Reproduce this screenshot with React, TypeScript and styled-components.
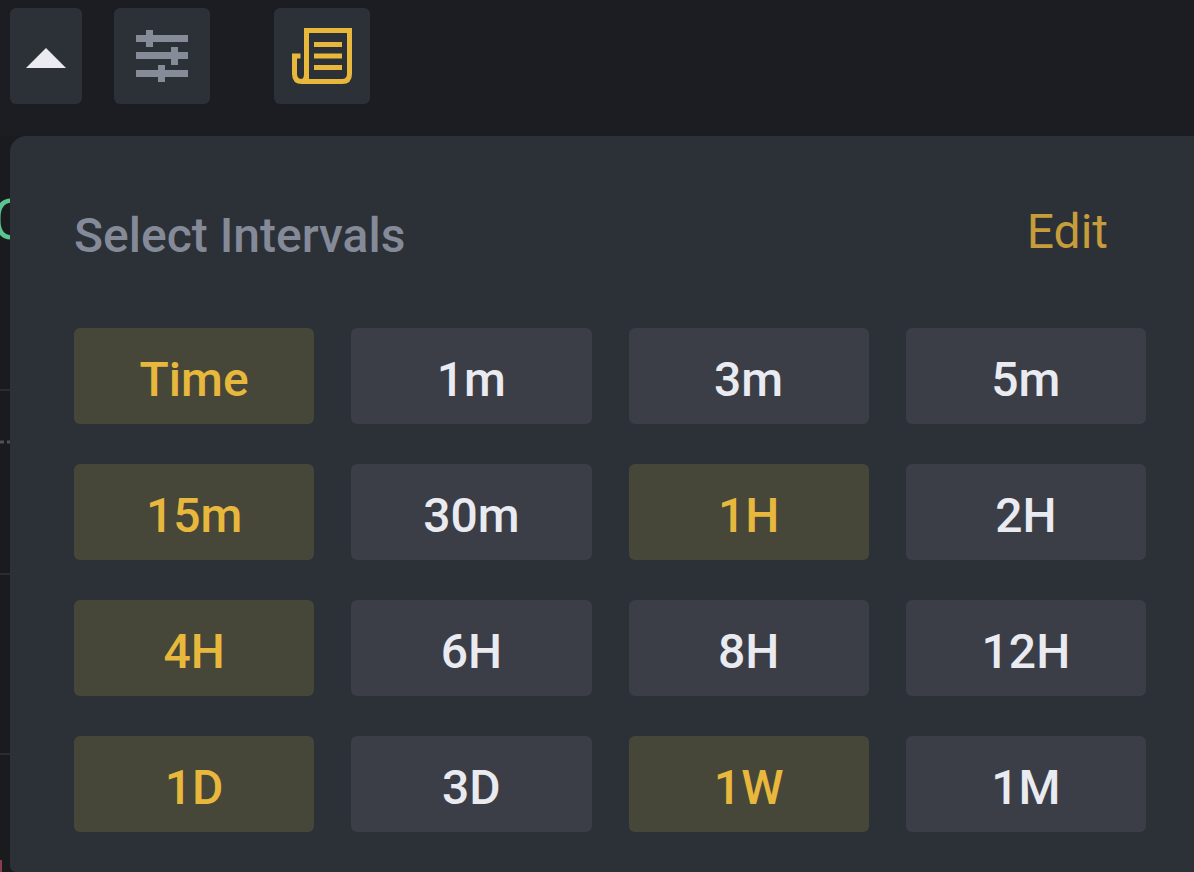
import React, { useState } from "react";
import styled, { createGlobalStyle } from "styled-components";

const GlobalStyle = createGlobalStyle`
  *, *::before, *::after { box-sizing: border-box; }
  body {
    margin: 0;
    background: #1c1d22;
    font-family: Roboto, "Liberation Sans", sans-serif;
  }
  button { font: inherit; border: 0; padding: 0; cursor: pointer; }
`;

const Page = styled.div`
  display: flex;
  flex-direction: column;
  min-height: 100vh;
`;

const Toolbar = styled.header`
  display: flex;
  gap: 32px;
  padding: 8px 10px 32px;
`;

const ToolButton = styled.button<{ $narrow?: boolean; $apart?: boolean }>`
  display: flex;
  align-items: center;
  justify-content: center;
  width: ${(p) => (p.$narrow ? 72 : 96)}px;
  height: 96px;
  margin-left: ${(p) => (p.$apart ? 32 : 0)}px;
  border-radius: 6px;
  background: #2c3037;
`;

const Workspace = styled.main`
  position: relative;
  flex: 1;
  padding-left: 10px;
`;

const ChartLayer = styled.div`
  position: absolute;
  inset: 0;
  overflow: hidden;
  background: #1a1b1f;
`;

const ChartLines = styled.svg`
  position: absolute;
  inset: 0;
`;

const ChartValue = styled.span`
  position: absolute;
  top: 48px;
  left: -8px;
  font-size: 56px;
  line-height: 72px;
  color: #5cc491;
`;

const Panel = styled.section`
  position: relative;
  padding: 64px 48px 40px 64px;
  border-radius: 16px 0 0 6px;
  background: #2c3037;
`;

const PanelHeader = styled.div`
  display: flex;
  justify-content: space-between;
  padding-right: 38px;
  margin-bottom: 56px;
`;

const Title = styled.h2`
  margin: 0;
  font-size: 48px;
  line-height: 72px;
  font-weight: 500;
  color: #848a98;
`;

const EditButton = styled.button`
  background: none;
  font-size: 48px;
  line-height: 64px;
  height: 64px;
  color: #c69d3a;
`;

const IntervalGrid = styled.div`
  display: grid;
  grid-template-columns: repeat(4, 1fr);
  gap: 40px 37px;
`;

const IntervalButton = styled.button<{ $active: boolean }>`
  height: 96px;
  padding-top: 8px;
  border-radius: 6px;
  font-size: 48px;
  line-height: 64px;
  font-weight: 500;
  background: ${(p) => (p.$active ? "#474739" : "#3b3e47")};
  color: ${(p) => (p.$active ? "#e8b83d" : "#e9ebf0")};
`;

const intervals = [
  "Time", "1m", "3m", "5m",
  "15m", "30m", "1H", "2H",
  "4H", "6H", "8H", "12H",
  "1D", "3D", "1W", "1M",
];

export default function App() {
  const [selected, setSelected] = useState(["Time", "15m", "1H", "4H", "1D", "1W"]);

  const toggle = (name: string) =>
    setSelected((all) => (all.includes(name) ? all.filter((n) => n !== name) : [...all, name]));

  return (
    <>
      <GlobalStyle />
      <Page>
        <Toolbar>
          <ToolButton $narrow aria-label="Close intervals">
            <svg width="40" height="24" viewBox="0 0 40 24">
              <path d="M20 4 40 24H0Z" fill="#e9ebf0" />
            </svg>
          </ToolButton>
          <ToolButton aria-label="Indicators">
            <svg width="52" height="52" viewBox="0 0 52 52" fill="#868b98">
              <path d="M0 5h10V0h7v5h35v7H17v5h-7v-5H0zM0 22h35v-5h7v5h10v7H42v6h-7v-6H0zM0 40h22v-5h7v5h23v7H29v5h-7v-5H0z" />
            </svg>
          </ToolButton>
          <ToolButton $apart aria-label="News">
            <svg width="60" height="56" viewBox="0 0 60 56" fill="none" stroke="#e8b83d" strokeWidth="5">
              <path d="M14.500 53.500V2.500H57.500V46Q57.500 53.500 50 53.500H10Q2.500 53.500 2.500 46V28H8.500M14.500 46Q14.500 53.500 9 53.500" />
              <path d="M22 16.500H50M22 28H50M22 39.500H50" />
            </svg>
          </ToolButton>
        </Toolbar>
        <Workspace>
          <ChartLayer aria-hidden="true">
            <ChartLines width="100%" height="736">
              <path d="M0 254H1194M0 438H1194M0 618H1194" stroke="#2a2c32" strokeWidth="2" />
              <path d="M0 306H1194" stroke="#4d5159" strokeWidth="3" strokeDasharray="4 3" />
              <rect x="0" y="724" width="2" height="12" fill="#8c3c4c" />
            </ChartLines>
            <ChartValue>C</ChartValue>
          </ChartLayer>
          <Panel>
            <PanelHeader>
              <Title>Select Intervals</Title>
              <EditButton>Edit</EditButton>
            </PanelHeader>
            <IntervalGrid>
              {intervals.map((name) => (
                <IntervalButton
                  key={name}
                  $active={selected.includes(name)}
                  aria-pressed={selected.includes(name)}
                  onClick={() => toggle(name)}
                >
                  {name}
                </IntervalButton>
              ))}
            </IntervalGrid>
          </Panel>
        </Workspace>
      </Page>
    </>
  );
}
